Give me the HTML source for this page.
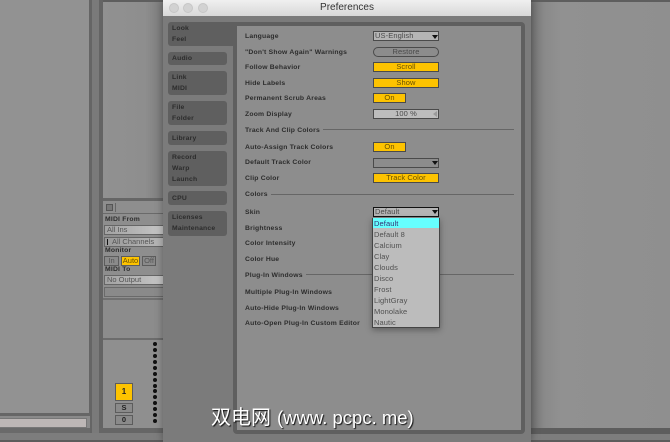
<!DOCTYPE html>
<html><head><meta charset="utf-8">
<style>
html,body{margin:0;padding:0;background:#8f8f8f}
#p{position:relative;width:670px;height:442px;overflow:hidden;background:#909090;font-family:"Liberation Sans","Noto Sans CJK SC",sans-serif}
#p div{position:absolute;box-sizing:border-box}
.t{font-size:6.8px;font-weight:bold;color:#2c2c2c;letter-spacing:.2px;white-space:nowrap;line-height:10px;filter:blur(.3px)}
.s{font-size:7.5px;color:#505050;letter-spacing:.1px;white-space:nowrap;line-height:10px;filter:blur(.25px)}
.tab{background:#5f5f5f;border-radius:3px;left:168px;width:59px}
.c{left:373px;width:66px;height:10px;border:1px solid #4a4a4a;text-align:center;font-size:7.5px;line-height:8px;color:#4a4a4a;letter-spacing:.1px;filter:blur(.3px)}
.y{background:#fdc300;color:#6a5000}
.a{width:0;height:0;border-left:3px solid transparent;border-right:3px solid transparent;border-top:4px solid #111}
.ln{height:1px;background:#666}
.sb{background:linear-gradient(90deg,#a2a2a2,#c6c6c6);border:1px solid #666;font-size:7.5px;line-height:8px;color:#555;padding-left:2px;white-space:nowrap;overflow:hidden;filter:blur(.2px)}
.b{border:1px solid #5c5c5c;background:#8a8a8a;font-size:7.5px;line-height:8px;color:#444;text-align:center;filter:blur(.2px)}
.d{width:4px;height:4px;border-radius:50%;background:#111;left:153px}
</style></head><body>
<div id="p">
<!-- Left background -->
<div style="left:0;top:0;width:89px;height:413px;background:#929292"></div>
<div style="left:89px;top:0;width:3px;height:434px;background:#656565"></div>
<div style="left:92px;top:0;width:7px;height:442px;background:#7a7a7a"></div>
<div style="left:99px;top:0;width:4px;height:434px;background:#646464"></div>
<div style="left:103px;top:0;width:60px;height:198px;background:linear-gradient(90deg,#919191,#8e8e8e 70%,#7c7c7c)"></div>
<div style="left:103px;top:0;width:567px;height:2px;background:#5e5e5e"></div>
<div style="left:0;top:413px;width:90px;height:3px;background:#666"></div>
<div style="left:0;top:416px;width:90px;height:16px;background:#8a8a8a"></div>
<div style="left:0;top:418px;width:87px;height:10px;background:#bdb7b6;border:1px solid #777;border-left:none"></div>
<div style="left:0;top:428px;width:90px;height:5px;background:#6a6a6a"></div>
<div style="left:0;top:433px;width:670px;height:7px;background:#7d7d7d"></div>
<div style="left:0;top:440px;width:670px;height:2px;background:#5c5c5c"></div>
<!-- Track panel -->
<div style="left:103px;top:198px;width:60px;height:3px;background:#666"></div>
<div style="left:103px;top:201px;width:60px;height:97px;background:#8e8e8e"></div>
<div style="left:103px;top:213px;width:60px;height:1px;background:#6a6a6a"></div>
<div style="left:106px;top:204px;width:7px;height:7px;background:#777;border:1px solid #555"></div>
<div style="left:115px;top:203px;width:1px;height:9px;background:#666"></div>
<div class="t" style="left:105px;top:215px">MIDI From</div>
<div class="sb" style="left:104px;top:225px;width:60px;height:10px">All Ins</div>
<div class="sb" style="left:104px;top:237px;width:60px;height:10px;padding-left:7px;background:linear-gradient(90deg,#999,#b8b8b8)">All Channels</div>
<div style="left:107px;top:239px;width:1px;height:6px;background:#111"></div>
<div class="t" style="left:105px;top:246px">Monitor</div>
<div class="b" style="left:104px;top:256px;width:15px;height:10px;color:#555">In</div>
<div class="b" style="left:121px;top:256px;width:19px;height:10px;background:#fdc300;color:#6a5000">Auto</div>
<div class="b" style="left:142px;top:256px;width:14px;height:10px;color:#555">Off</div>
<div class="t" style="left:105px;top:265px">MIDI To</div>
<div class="sb" style="left:104px;top:275px;width:60px;height:10px">No Output</div>
<div style="left:104px;top:287px;width:60px;height:10px;background:#8a8a8a;border:1px solid #6a6a6a"></div>
<div style="left:103px;top:298px;width:60px;height:2px;background:#707070"></div>
<div style="left:103px;top:300px;width:60px;height:38px;background:#8c8c8c"></div>
<div style="left:103px;top:338px;width:60px;height:2px;background:#6c6c6c"></div>
<div style="left:103px;top:340px;width:60px;height:88px;background:#8f8f8f"></div>
<div style="left:99px;top:428px;width:64px;height:5px;background:#666"></div>
<div class="b" style="left:115px;top:383px;width:18px;height:18px;background:#fdc300;color:#222;font-weight:bold;font-size:8px;line-height:16px">1</div>
<div class="b" style="left:115px;top:403px;width:18px;height:10px;font-weight:bold;color:#222">S</div>
<div class="b" style="left:115px;top:415px;width:18px;height:10px;font-weight:bold;color:#222">0</div>
<div class="d" style="top:342px"></div><div class="d" style="top:348px"></div><div class="d" style="top:354px"></div><div class="d" style="top:360px"></div><div class="d" style="top:366px"></div><div class="d" style="top:372px"></div><div class="d" style="top:378px"></div><div class="d" style="top:384px"></div><div class="d" style="top:389px"></div><div class="d" style="top:395px"></div><div class="d" style="top:401px"></div><div class="d" style="top:407px"></div><div class="d" style="top:413px"></div><div class="d" style="top:419px"></div>
<!-- Right side -->
<div style="left:531px;top:2px;width:139px;height:426px;background:linear-gradient(90deg,#727272,#8a8a8a 14px,#919191 30px,#8f8f8f)"></div>
<div style="left:531px;top:428px;width:139px;height:6px;background:#5d5d5d"></div>
<!-- Window -->
<div style="left:163px;top:0;width:368px;height:442px;background:#7b7b7b;box-shadow:0 0 8px rgba(0,0,0,.35)"></div>
<div style="left:163px;top:0;width:368px;height:16px;background:linear-gradient(#f0f0f0,#d8d8d8);color:#333;font-size:10px;line-height:16px;text-align:center">Preferences</div>
<div style="left:169px;top:3px;width:10px;height:10px;border-radius:50%;background:#d2d2d2;border:1px solid #c6c6c6"></div>
<div style="left:183px;top:3px;width:10px;height:10px;border-radius:50%;background:#d2d2d2;border:1px solid #c6c6c6"></div>
<div style="left:198px;top:3px;width:10px;height:10px;border-radius:50%;background:#d2d2d2;border:1px solid #c6c6c6"></div>
<!-- Pane -->
<div style="left:233px;top:22px;width:292px;height:412px;background:#5f5f5f;border-radius:4px"></div>
<div style="left:237px;top:26px;width:284px;height:404px;background:#8d8d8d"></div>
<!-- Tabs -->
<div style="left:168px;top:22px;width:69px;height:24px;background:#5f5f5f;border-radius:3px 0 0 3px"></div>
<div style="left:228px;top:46px;width:5px;height:5px;background:#7b7b7b;border-radius:0 4px 0 0"></div>
<div class="tab" style="top:52px;height:13px"></div>
<div class="tab" style="top:71px;height:24px"></div>
<div class="tab" style="top:101px;height:24px"></div>
<div class="tab" style="top:131px;height:14px"></div>
<div class="tab" style="top:151px;height:35px"></div>
<div class="tab" style="top:191px;height:14px"></div>
<div class="tab" style="top:211px;height:25px"></div>
<div class="t" style="left:172px;top:24px">Look</div>
<div class="t" style="left:172px;top:35px">Feel</div>
<div class="t" style="left:172px;top:54px">Audio</div>
<div class="t" style="left:172px;top:73px">Link</div>
<div class="t" style="left:172px;top:84px">MIDI</div>
<div class="t" style="left:172px;top:103px">File</div>
<div class="t" style="left:172px;top:114px">Folder</div>
<div class="t" style="left:172px;top:134px">Library</div>
<div class="t" style="left:172px;top:153px">Record</div>
<div class="t" style="left:172px;top:164px">Warp</div>
<div class="t" style="left:172px;top:175px">Launch</div>
<div class="t" style="left:172px;top:194px">CPU</div>
<div class="t" style="left:172px;top:213px">Licenses</div>
<div class="t" style="left:172px;top:224px">Maintenance</div>
<!-- Labels -->
<div class="t" style="left:245px;top:32px">Language</div>
<div class="t" style="left:245px;top:48px">"Don't Show Again" Warnings</div>
<div class="t" style="left:245px;top:63px">Follow Behavior</div>
<div class="t" style="left:245px;top:79px">Hide Labels</div>
<div class="t" style="left:245px;top:94px">Permanent Scrub Areas</div>
<div class="t" style="left:245px;top:110px">Zoom Display</div>
<div class="t" style="left:245px;top:126px">Track And Clip Colors</div>
<div class="ln" style="left:323px;top:129px;width:191px"></div>
<div class="t" style="left:245px;top:143px">Auto-Assign Track Colors</div>
<div class="t" style="left:245px;top:158px">Default Track Color</div>
<div class="t" style="left:245px;top:174px">Clip Color</div>
<div class="t" style="left:245px;top:190px">Colors</div>
<div class="ln" style="left:271px;top:194px;width:243px"></div>
<div class="t" style="left:245px;top:208px">Skin</div>
<div class="t" style="left:245px;top:224px">Brightness</div>
<div class="t" style="left:245px;top:239px">Color Intensity</div>
<div class="t" style="left:245px;top:255px">Color Hue</div>
<div class="t" style="left:245px;top:271px">Plug-In Windows</div>
<div class="ln" style="left:306px;top:274px;width:208px"></div>
<div class="t" style="left:245px;top:288px">Multiple Plug-In Windows</div>
<div class="t" style="left:245px;top:304px">Auto-Hide Plug-In Windows</div>
<div class="t" style="left:245px;top:319px">Auto-Open Plug-In Custom Editor</div>
<!-- Controls -->
<div class="c" style="top:31px;background:#b5b5b5;text-align:left;padding-left:1px">US-English</div>
<div class="a" style="left:432px;top:35px"></div>
<div class="c" style="top:47px;background:#8c8c8c;border-radius:5px">Restore</div>
<div class="c y" style="top:62px">Scroll</div>
<div class="c y" style="top:78px">Show</div>
<div class="c y" style="top:93px;width:33px">On</div>
<div class="c" style="top:109px;background:#bdbdbd">100 %</div>
<div style="left:433px;top:111px;width:0;height:0;border-top:3px solid transparent;border-bottom:3px solid transparent;border-right:4px solid #999"></div>
<div class="c y" style="top:142px;width:33px">On</div>
<div class="c" style="top:158px;background:#8c8c8c"></div>
<div class="a" style="left:432px;top:161px"></div>
<div class="c y" style="top:173px">Track Color</div>
<!-- Skin -->
<div class="c" style="top:207px;background:#b5b5b5;text-align:left;padding-left:1px;border-color:#111">Default</div>
<div class="a" style="left:432px;top:210px"></div>
<div style="left:372px;top:218px;width:68px;height:110px;background:#bcbcbc;border:1px solid #444;box-shadow:0 2px 6px rgba(0,0,0,.35)"></div>
<div style="left:373px;top:218px;width:66px;height:10px;background:#66ffff"></div>
<div class="s" style="left:374px;top:219px;color:#337">Default</div>
<div class="s" style="left:374px;top:230px">Default 8</div>
<div class="s" style="left:374px;top:241px">Calcium</div>
<div class="s" style="left:374px;top:252px">Clay</div>
<div class="s" style="left:374px;top:263px">Clouds</div>
<div class="s" style="left:374px;top:274px">Disco</div>
<div class="s" style="left:374px;top:285px">Frost</div>
<div class="s" style="left:374px;top:296px">LightGray</div>
<div class="s" style="left:374px;top:307px">Monolake</div>
<div class="s" style="left:374px;top:318px">Nautic</div>
<!-- Watermark -->
<div style="left:211px;top:405px;font-size:20px;line-height:26px;color:#fff;white-space:nowrap;text-shadow:1px 1px 1px #111">双电网<span style="font-size:18.5px;margin-left:6px">(www. pcpc. me)</span></div>
</div>
</body></html>
